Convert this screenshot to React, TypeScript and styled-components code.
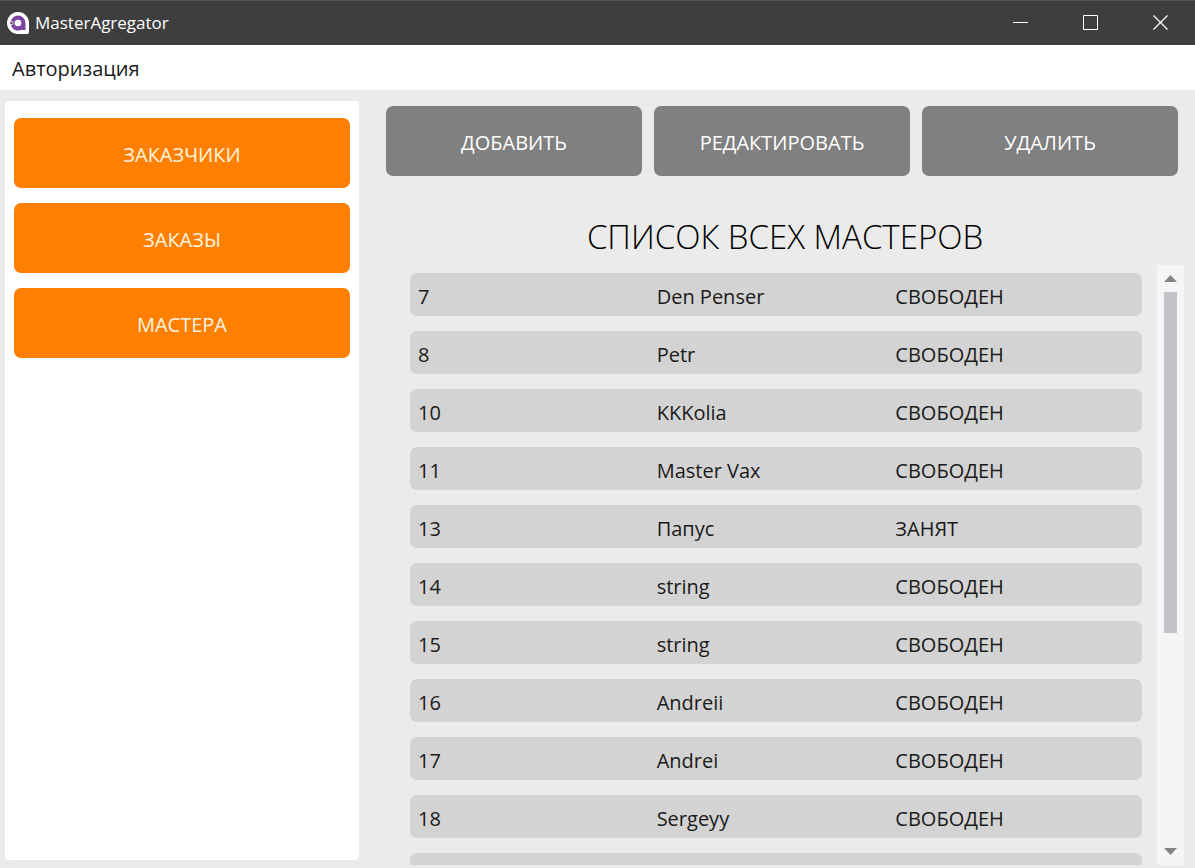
import React, { useRef } from "react";
import styled, { createGlobalStyle } from "styled-components";

const GlobalStyle = createGlobalStyle`
  *, *::before, *::after { box-sizing: border-box; }
  body { margin: 0; background: #ebebeb; }
  body, button { font-family: "Open Sans", "Noto Sans", sans-serif; }
`;

const AppWindow = styled.div`
  display: flex;
  flex-direction: column;
  height: 100vh;
  overflow: hidden;
  color: #000;
`;

const TitleBar = styled.header`
  display: flex;
  align-items: center;
  flex: none;
  height: 45px;
  padding-left: 6px;
  border-top: 1px solid #525252;
  background: #3e3e3e;
  color: #fff;
`;

const AppName = styled.span`
  flex: 1;
  padding-left: 5px;
  font-size: 17px;
  line-height: 24px;
`;

const WindowButton = styled.button`
  display: grid;
  place-items: center;
  width: 70px;
  height: 44px;
  padding: 0 0 1px;
  border: 0;
  background: none;
  color: #fff;
`;

const MenuBar = styled.nav`
  display: flex;
  align-items: center;
  flex: none;
  height: 45px;
  padding: 2px 12px 0;
  background: #fff;
`;

const MenuItem = styled.button`
  padding: 0;
  border: 0;
  background: none;
  color: #1a1a1a;
  font-size: 20px;
  font-weight: 400;
  line-height: 28px;
`;

const Content = styled.div`
  display: flex;
  flex: 1;
  min-height: 0;
`;

const Sidebar = styled.aside`
  display: flex;
  flex-direction: column;
  flex: none;
  gap: 15px;
  width: 354px;
  margin: 11px 0 8px 5px;
  padding: 17px 9px;
  border-radius: 4px;
  background: #fff;
`;

const ActionButton = styled.button<{ $tone: "orange" | "gray" }>`
  flex: ${(p) => (p.$tone === "gray" ? "1" : "none")};
  height: 70px;
  padding: 4px 0 0;
  border: 0;
  border-radius: 7px;
  background: ${(p) => (p.$tone === "gray" ? "#808080" : "#ff8000")};
  color: ${(p) => (p.$tone === "gray" ? "#fff" : "#fff5e0")};
  font-size: 20px;
  font-weight: 400;
  line-height: 28px;
`;

const Main = styled.main`
  display: flex;
  flex-direction: column;
  flex: 1;
  min-width: 0;
  padding: 16px 11px 3px 27px;
`;

const Toolbar = styled.div`
  display: flex;
  gap: 12px;
  margin-right: 6px;
`;

const Heading = styled.h1`
  margin: 37px 0 4px;
  font-size: 33px;
  font-weight: 300;
  line-height: 48px;
  text-align: center;
`;

const ListArea = styled.div`
  display: flex;
  flex: 1;
  gap: 15px;
  min-height: 0;
  margin-left: 24px;
`;

const ListViewport = styled.div`
  flex: 1;
  min-width: 0;
  padding-top: 8px;
  overflow-y: auto;
  scrollbar-width: none;
`;

const MasterTable = styled.table`
  display: block;
`;

const MasterRows = styled.tbody`
  display: flex;
  flex-direction: column;
  gap: 15px;
`;

const MasterRow = styled.tr`
  display: grid;
  grid-template-columns: repeat(3, 1fr);
  align-items: center;
  height: 43px;
  padding: 5px 8px 0;
  border-radius: 7px;
  background: #d3d3d3;
`;

const Cell = styled.td`
  padding: 0;
  color: #1a1a1a;
  font-size: 20px;
  font-weight: 400;
  line-height: 28px;
`;

const ScrollBar = styled.div`
  display: flex;
  flex-direction: column;
  width: 27px;
  background: #f5f5f5;
`;

const ScrollButton = styled.button`
  display: grid;
  place-items: center;
  flex: none;
  height: 27px;
  padding: 0;
  border: 0;
  background: none;
  color: #848484;
`;

const ScrollTrack = styled.div`
  flex: 1;
  padding: 0 7px;
`;

const ScrollThumb = styled.div`
  height: 62.5%;
  background: #c2c3c9;
`;

const sections = ["ЗАКАЗЧИКИ", "ЗАКАЗЫ", "МАСТЕРА"];
const actions = ["ДОБАВИТЬ", "РЕДАКТИРОВАТЬ", "УДАЛИТЬ"];

const masters = [
  ["7", "Den Penser", "СВОБОДЕН"],
  ["8", "Petr", "СВОБОДЕН"],
  ["10", "KKKolia", "СВОБОДЕН"],
  ["11", "Master Vax", "СВОБОДЕН"],
  ["13", "Папус", "ЗАНЯТ"],
  ["14", "string", "СВОБОДЕН"],
  ["15", "string", "СВОБОДЕН"],
  ["16", "Andreii", "СВОБОДЕН"],
  ["17", "Andrei", "СВОБОДЕН"],
  ["18", "Sergeyy", "СВОБОДЕН"],
  ["", "", ""],
];

function Logo() {
  return (
    <svg width="24" height="24" viewBox="0 0 24 24" aria-hidden="true">
      <path d="M12 1a11 11 0 1 0 0 22h9a2 2 0 0 0 2-2v-9A11 11 0 0 0 12 1z" fill="#fff" />
      <path d="M12 4.500a7.500 7.500 0 1 0 3 14.400h4.500V12A7.500 7.500 0 0 0 12 4.500z" fill="#7c45a0" />
      <circle cx="12" cy="12" r="3.300" fill="#fff" />
      <circle cx="5.500" cy="12" r="2" fill="#fff" />
      <circle cx="5.500" cy="12" r="1.200" fill="#4a2b66" />
    </svg>
  );
}

export default function App() {
  const list = useRef<HTMLDivElement>(null);
  const scroll = (top: number) => list.current?.scrollBy({ top, behavior: "smooth" });

  return (
    <AppWindow>
      <GlobalStyle />
      <TitleBar>
        <Logo />
        <AppName>MasterAgregator</AppName>
        <WindowButton aria-label="Свернуть">
          <svg width="15" height="15" stroke="currentColor">
            <path d="M0 7.500h15" />
          </svg>
        </WindowButton>
        <WindowButton aria-label="Развернуть">
          <svg width="15" height="15" fill="none" stroke="currentColor">
            <path d="M.5.5h14v14H.5z" />
          </svg>
        </WindowButton>
        <WindowButton aria-label="Закрыть">
          <svg width="15" height="15" stroke="currentColor" strokeWidth="1.200">
            <path d="M.5.5l14 14M14.500.5l-14 14" />
          </svg>
        </WindowButton>
      </TitleBar>
      <MenuBar>
        <MenuItem>Авторизация</MenuItem>
      </MenuBar>
      <Content>
        <Sidebar>
          {sections.map((label) => (
            <ActionButton key={label} $tone="orange">{label}</ActionButton>
          ))}
        </Sidebar>
        <Main>
          <Toolbar>
            {actions.map((label) => (
              <ActionButton key={label} $tone="gray">{label}</ActionButton>
            ))}
          </Toolbar>
          <Heading>СПИСОК ВСЕХ МАСТЕРОВ</Heading>
          <ListArea>
            <ListViewport ref={list}>
              <MasterTable>
                <MasterRows>
                  {masters.map((row, i) => (
                    <MasterRow key={i}>
                      {row.map((value, c) => (
                        <Cell key={c}>{value}</Cell>
                      ))}
                    </MasterRow>
                  ))}
                </MasterRows>
              </MasterTable>
            </ListViewport>
            <ScrollBar>
              <ScrollButton aria-label="Прокрутить вверх" onClick={() => scroll(-58)}>
                <svg width="13" height="7" fill="currentColor">
                  <path d="M0 7L6.500 0 13 7z" />
                </svg>
              </ScrollButton>
              <ScrollTrack>
                <ScrollThumb />
              </ScrollTrack>
              <ScrollButton aria-label="Прокрутить вниз" onClick={() => scroll(58)}>
                <svg width="13" height="7" fill="currentColor">
                  <path d="M0 0h13L6.500 7z" />
                </svg>
              </ScrollButton>
            </ScrollBar>
          </ListArea>
        </Main>
      </Content>
    </AppWindow>
  );
}
